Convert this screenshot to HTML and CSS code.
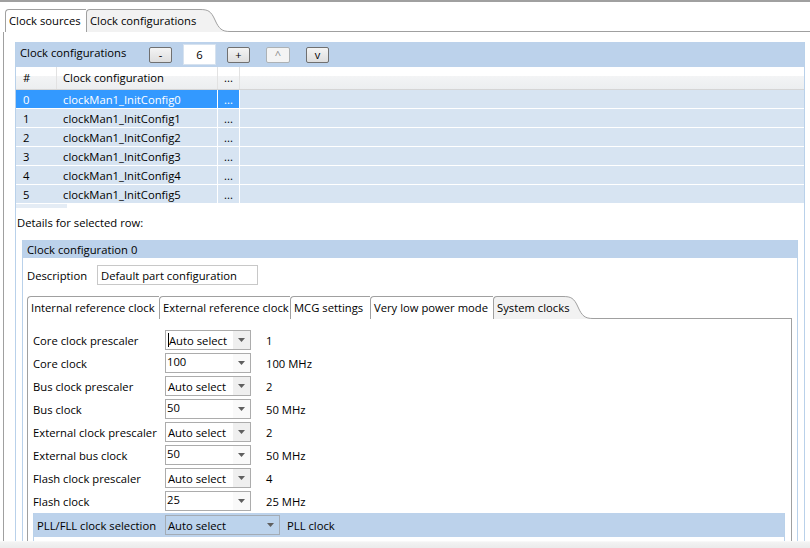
FILE: index.html
```html
<!DOCTYPE html>
<html>
<head>
<meta charset="utf-8">
<link rel="stylesheet" href="styles.css">
</head>
<body>
<div class="app">
  <div class="top-rule"></div>
  <div class="main">
    <div class="tabstrip outer-tabs">
      <div class="tab t-sources"><span class="tl">Clock sources</span></div>
      <div class="tab selected t-configs"><span class="tl">Clock configurations</span></div>
      <svg class="tab-curve" viewBox="0 0 30 23" preserveAspectRatio="none"><path d="M0,0.5 C8,0.5 11,2 15,11 C19,20 22,22.5 30,22.5 L30,23 L0,23 Z" fill="#f2f2f2"/><path d="M0,0.5 C8,0.5 11,2 15,11 C19,20 22,22.5 30,22.5" fill="none" stroke="#a0a0a0" stroke-width="1"/></svg>
      <div class="tab-fill"></div>
    </div>
    <div class="frame">
      <section class="section outer">
        <div class="sec-head">
          <span class="sec-title">Clock configurations</span>
          <div class="btn">-</div>
          <div class="count">6</div>
          <div class="btn b-plus">+</div>
          <div class="btn b-up disabled">^</div>
          <div class="btn b-down">v</div>
        </div>
        <div class="table">
          <div class="thead">
            <div class="c c-num">#</div>
            <div class="c c-name">Clock configuration</div>
            <div class="c c-dots">...</div>
            <div class="c c-rest"></div>
          </div>
          <div class="tr sel"><div class="c c-num">0</div><div class="c c-name">clockMan1_InitConfig0</div><div class="c c-dots">...</div><div class="c c-rest"></div></div>
          <div class="tr"><div class="c c-num">1</div><div class="c c-name">clockMan1_InitConfig1</div><div class="c c-dots">...</div><div class="c c-rest"></div></div>
          <div class="tr"><div class="c c-num">2</div><div class="c c-name">clockMan1_InitConfig2</div><div class="c c-dots">...</div><div class="c c-rest"></div></div>
          <div class="tr"><div class="c c-num">3</div><div class="c c-name">clockMan1_InitConfig3</div><div class="c c-dots">...</div><div class="c c-rest"></div></div>
          <div class="tr"><div class="c c-num">4</div><div class="c c-name">clockMan1_InitConfig4</div><div class="c c-dots">...</div><div class="c c-rest"></div></div>
          <div class="tr"><div class="c c-num">5</div><div class="c c-name">clockMan1_InitConfig5</div><div class="c c-dots">...</div><div class="c c-rest"></div></div>
          <div class="tr-partial"><div class="p-num"></div></div>
        </div>
        <div class="details-label">Details for selected row:</div>
        <section class="section inner">
          <div class="inner-head">Clock configuration 0</div>
          <div class="desc-row">
            <span class="desc-label">Description</span>
            <div class="textbox">Default part configuration</div>
          </div>
          <div class="folder">
            <div class="tabstrip inner-tabs">
              <div class="tab w1"><span class="tl">Internal reference clock</span></div>
              <div class="tab w2"><span class="tl">External reference clock</span></div>
              <div class="tab w3"><span class="tl">MCG settings</span></div>
              <div class="tab w4"><span class="tl">Very low power mode</span></div>
              <div class="tab selected w5"><span class="tl">System clocks</span></div>
              <svg class="tab-curve" viewBox="0 0 30 23" preserveAspectRatio="none"><path d="M0,0.5 C8,0.5 11,2 15,11 C19,20 22,22.5 30,22.5 L30,23 L0,23 Z" fill="#f2f2f2"/><path d="M0,0.5 C8,0.5 11,2 15,11 C19,20 22,22.5 30,22.5" fill="none" stroke="#a0a0a0" stroke-width="1"/></svg>
              <div class="tab-fill"></div>
            </div>
            <div class="tab-body">
              <div class="form">
                <div class="frow"><span class="flabel">Core clock prescaler</span><div class="combo"><span class="val"><span class="caret"></span>Auto select</span><span class="abtn"><svg class="arrow" viewBox="0 0 7 4"><path d="M0,0 L7,0 L3.5,4 Z" fill="#5f5f5f"/></svg></span></div><span class="fvalue">1</span></div>
                <div class="frow"><span class="flabel">Core clock</span><div class="combo edit"><span class="val">100</span><span class="abtn"><svg class="arrow" viewBox="0 0 7 4"><path d="M0,0 L7,0 L3.5,4 Z" fill="#5f5f5f"/></svg></span></div><span class="fvalue">100 MHz</span></div>
                <div class="frow"><span class="flabel">Bus clock prescaler</span><div class="combo"><span class="val">Auto select</span><span class="abtn"><svg class="arrow" viewBox="0 0 7 4"><path d="M0,0 L7,0 L3.5,4 Z" fill="#5f5f5f"/></svg></span></div><span class="fvalue">2</span></div>
                <div class="frow"><span class="flabel">Bus clock</span><div class="combo edit"><span class="val">50</span><span class="abtn"><svg class="arrow" viewBox="0 0 7 4"><path d="M0,0 L7,0 L3.5,4 Z" fill="#5f5f5f"/></svg></span></div><span class="fvalue">50 MHz</span></div>
                <div class="frow"><span class="flabel">External clock prescaler</span><div class="combo"><span class="val">Auto select</span><span class="abtn"><svg class="arrow" viewBox="0 0 7 4"><path d="M0,0 L7,0 L3.5,4 Z" fill="#5f5f5f"/></svg></span></div><span class="fvalue">2</span></div>
                <div class="frow"><span class="flabel">External bus clock</span><div class="combo edit"><span class="val">50</span><span class="abtn"><svg class="arrow" viewBox="0 0 7 4"><path d="M0,0 L7,0 L3.5,4 Z" fill="#5f5f5f"/></svg></span></div><span class="fvalue">50 MHz</span></div>
                <div class="frow"><span class="flabel">Flash clock prescaler</span><div class="combo"><span class="val">Auto select</span><span class="abtn"><svg class="arrow" viewBox="0 0 7 4"><path d="M0,0 L7,0 L3.5,4 Z" fill="#5f5f5f"/></svg></span></div><span class="fvalue">4</span></div>
                <div class="frow"><span class="flabel">Flash clock</span><div class="combo edit"><span class="val">25</span><span class="abtn"><svg class="arrow" viewBox="0 0 7 4"><path d="M0,0 L7,0 L3.5,4 Z" fill="#5f5f5f"/></svg></span></div><span class="fvalue">25 MHz</span></div>
              </div>
              <div class="group">
                <div class="frow pll"><span class="flabel">PLL/FLL clock selection</span><div class="combo wide"><span class="val">Auto select</span><span class="abtn"><svg class="arrow" viewBox="0 0 7 4"><path d="M0,0 L7,0 L3.5,4 Z" fill="#5f5f5f"/></svg></span></div><span class="fvalue">PLL clock</span></div>
              </div>
            </div>
          </div>
        </section>
      </section>
    </div>
  </div>
  <div class="status"></div>
</div>
</body>
</html>
```

FILE: styles.css
```css
* { box-sizing: border-box; }
html, body { margin: 0; padding: 0; }
body {
  width: 810px;
  height: 548px;
  overflow: hidden;
  background: #fff;
  font-family: "Open Sans", "Noto Sans", "Liberation Sans", sans-serif;
  font-size: 11.25px;
  color: #000;
}
.app { display: flex; flex-direction: column; height: 548px; }
.top-rule { height: 2px; background: #a0a0a0; flex: none; }
.main { flex: 1; min-height: 0; overflow: hidden; display: flex; flex-direction: column; }
.status { height: 7px; flex: none; background: linear-gradient(#f3f3f3, #ebebeb); border-top: 1px solid #f8f8f8; }

/* tabs */
.tabstrip { display: flex; align-items: flex-end; flex: none; }
.outer-tabs { height: 30px; padding-left: 5px; }
.tab {
  height: 23px;
  display: flex;
  align-items: center;
  padding: 0 0 1px 3px;
  border-top: 1px solid #a0a0a0;
  border-left: 1px solid #a0a0a0;
  border-top-left-radius: 4px;
  background: #fff;
  white-space: nowrap;
  flex: none;
}
.tab .tl { position: relative; z-index: 1; }
.tab.selected { background: #f2f2f2; }
.tab-curve { width: 30px; height: 23px; flex: none; display: block; }
.tab-fill { flex: 1; height: 23px; border-bottom: 1px solid #a0a0a0; }
.t-sources { width: 81px; }
.t-configs { width: 114px; }

/* frame */
.frame {
  flex: 1;
  min-height: 0;
  margin-left: 3px;
  border-left: 1px solid #a0a0a0;
  padding: 10px 0 0 11px;
  overflow: hidden;
}
.section { border-left: 1px solid #b9d1ea; border-right: 1px solid #b9d1ea; background: #fff; }
.outer { width: 790px; height: 600px; }
.sec-head { height: 25px; background: #bcd2eb; display: flex; align-items: center; padding-left: 4px; }
.sec-title { width: 129px; flex: none; padding-bottom: 4px; }
.btn {
  width: 23px;
  height: 16px;
  border: 1px solid #707070;
  border-radius: 2px;
  background: linear-gradient(#f4f4f4, #dedede);
  display: flex;
  align-items: center;
  justify-content: center;
  font-size: 11px;
  line-height: 1;
  padding-bottom: 1px;
  flex: none;
}
.btn.disabled { border-color: #adb2b5; color: #8a8a8a; background: #f4f4f4; }
.count {
  width: 33px;
  height: 21px;
  margin-left: 11px;
  background: #fff;
  border: 1px solid #d6e2ef;
  display: flex;
  align-items: center;
  justify-content: center;
  flex: none;
}
.b-plus { margin-left: 11px; }
.b-up { margin-left: 16px; width: 24px; }
.b-down { margin-left: 16px; }

/* table */
.table { height: 142px; overflow: hidden; background: #fff; }
.thead {
  display: flex;
  height: 23px;
  background: linear-gradient(#ffffff 0%, #ffffff 40%, #f3f4f5 42%, #eceef0 100%);
  border-bottom: 1px solid #d5d5d5;
}
.c { display: flex; align-items: center; white-space: nowrap; }
.c-num { width: 41px; padding-left: 7px; border-right: 1px solid transparent; }
.c-name { width: 161px; padding-left: 6px; border-right: 1px solid #fff; }
.c-dots { width: 22px; padding-left: 6px; border-right: 1px solid #fff; }
.c-rest { flex: 1; }
.thead .c-num, .thead .c-name, .thead .c-dots { border-right-color: #e2e2e2; }
.thead .c { padding-bottom: 1px; }
.tr { display: flex; height: 19px; border-bottom: 1px solid #fff; background: #d7e4f2; }
.tr .c { padding-top: 1px; }
.tr.sel .c-num, .tr.sel .c-name, .tr.sel .c-dots { background: #3399ff; color: #fff; }
.tr-partial { height: 5px; display: flex; }
.p-num { width: 51px; height: 4px; background: #e4ecf5; }

.details-label { padding: 6px 0 9px 1px; line-height: 16px; }

/* inner section */
.inner { margin-left: 6px; width: 776px; height: 400px; }
.inner-head { height: 18px; background: #bcd2eb; padding-left: 4px; display: flex; align-items: center; }
.desc-row { display: flex; align-items: center; margin-top: 7px; padding-left: 4px; height: 20px; }
.desc-label { width: 70px; flex: none; }
.textbox { width: 161px; height: 20px; border: 1px solid #c8c8c8; padding-left: 3px; display: flex; align-items: center; }

.folder { margin: 11px 0 0 4px; width: 765px; }
.inner-tabs { height: 23px; }
.w1 { width: 132px; }
.w2 { width: 131px; }
.w3 { width: 80px; }
.w4 { width: 123px; }
.w5 { width: 70px; }
.tab-body {
  border-left: 1px solid #a0a0a0;
  border-right: 1px solid #a0a0a0;
  padding: 11px 0 0 5px;
  height: 300px;
}
.form { display: flex; flex-direction: column; gap: 3px; }
.frow { display: flex; align-items: center; height: 20px; }
.flabel { width: 132px; flex: none; white-space: nowrap; }
.combo {
  width: 86px;
  height: 20px;
  border: 1px solid #acacac;
  display: flex;
  background: #fff;
  flex: none;
}
.combo .val { flex: 1; padding-left: 2px; display: flex; align-items: center; white-space: nowrap; overflow: hidden; }
.combo.edit .val { padding-bottom: 3px; padding-left: 1px; }
.abtn { width: 17px; background: #efefef; display: flex; align-items: center; justify-content: center; flex: none; }
.combo.edit .abtn { background: #f9f9f9; }
.arrow { width: 7px; height: 4px; display: block; }
.caret { width: 1px; height: 14px; background: #000; margin-right: 0; flex: none; }
.fvalue { margin-left: 15px; white-space: nowrap; }

.group {
  margin-top: 2px;
  border-left: 1px solid #b9d1ea;
  border-right: 1px solid #b9d1ea;
  width: 752px;
  height: 40px;
}
.pll { height: 24px; background: #bcd2eb; padding-left: 3px; }
.pll .flabel { width: 128px; }
.combo.wide { width: 115px; background: #bcd3ec; border-color: #a3acb6; }
.combo.wide .abtn { background: transparent; }
.pll .fvalue { margin-left: 7px; }
```
